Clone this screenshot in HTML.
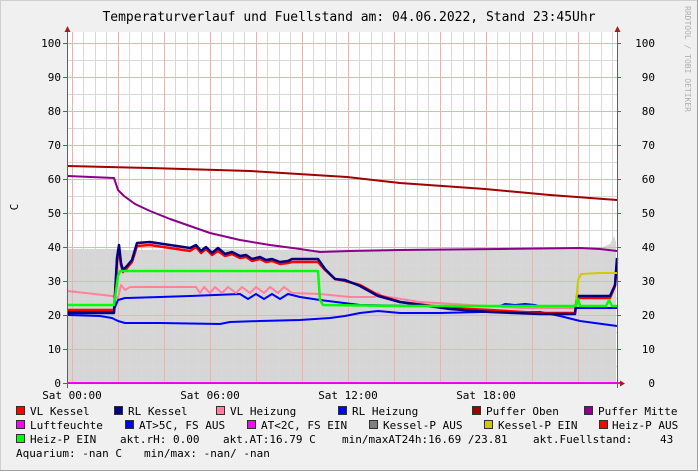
<!DOCTYPE html>
<html><head><meta charset="utf-8"><style>
html,body{margin:0;padding:0;}
body{width:698px;height:471px;background:#f0f0f0;overflow:hidden;position:relative;font-family:"DejaVu Sans Mono","Liberation Mono",monospace;}
svg{position:absolute;left:0;top:0;}
</style></head><body>
<svg width="698" height="471" xmlns="http://www.w3.org/2000/svg" font-family="DejaVu Sans Mono, Liberation Mono, monospace">
<rect x="0" y="0" width="698" height="471" fill="#f0f0f0"/>
<line x1="0.5" y1="0" x2="0.5" y2="471" stroke="#d0d0d0"/>
<line x1="0" y1="0.5" x2="698" y2="0.5" stroke="#d0d0d0"/>
<line x1="697.5" y1="0" x2="697.5" y2="471" stroke="#a0a0a0"/>
<line x1="0" y1="470.5" x2="698" y2="470.5" stroke="#a0a0a0"/>
<rect x="68" y="32" width="549" height="351" fill="#ffffff"/>
<!-- grey fill -->
<polygon points="68,249 120,249 125,250 200,249 300,250 400,249 500,248 600,248 610,244 614,236 616,242 616,383 68,383" fill="#d6d6d6"/>
<!-- minor grid -->
<g stroke="#d8d8d8" stroke-width="1">
<path d="M83.5 32V383M95.5 32V383M106.5 32V383M129.5 32V383M141.5 32V383M152.5 32V383M175.5 32V383M187.5 32V383M198.5 32V383M221.5 32V383M233.5 32V383M244.5 32V383M267.5 32V383M279.5 32V383M290.5 32V383M313.5 32V383M325.5 32V383M336.5 32V383M359.5 32V383M371.5 32V383M382.5 32V383M405.5 32V383M417.5 32V383M428.5 32V383M451.5 32V383M463.5 32V383M474.5 32V383M497.5 32V383M509.5 32V383M520.5 32V383M543.5 32V383M555.5 32V383M566.5 32V383M589.5 32V383M601.5 32V383M612.5 32V383"/>
<path d="M68 366.5H617M68 332.5H617M68 298.5H617M68 264.5H617M68 230.5H617M68 196.5H617M68 162.5H617M68 128.5H617M68 94.5H617M68 60.5H617"/>
</g>
<g stroke="#f0b0b0" stroke-width="1">
<path d="M72.5 32V383M118.5 32V383M164.5 32V383M210.5 32V383M256.5 32V383M302.5 32V383M348.5 32V383M394.5 32V383M440.5 32V383M486.5 32V383M532.5 32V383M578.5 32V383"/>
<path d="M68 349.5H617M68 315.5H617M68 281.5H617M68 247.5H617M68 213.5H617M68 179.5H617M68 145.5H617M68 111.5H617M68 77.5H617M68 43.5H617"/>
</g>
<g fill="none" stroke-linejoin="round">
<!-- AT>5C low blue -->
<polyline stroke="#0000ff" stroke-width="2" points="68,315 100,316 112,318 118,321 125,323 160,323 220,324 230,322 260,321 300,320 330,318 345,316 360,313 378,311 400,313 440,313 480,312 520,312 540,312 560,316 580,321 617,326"/>
<!-- RL Heizung blue -->
<polyline stroke="#0000ff" stroke-width="2" points="68,312 113,312 118,300 125,298 160,297 190,296 240,294 248,299 256,294 264,299 272,294 280,299 288,294 300,297 320,300 360,305 420,306 480,306 500,306 505,304 515,305 525,304 535,305 545,308 617,308"/>
<!-- VL Heizung pink -->
<polyline stroke="#ff80a0" stroke-width="2" points="68,291 112,296 118,298 121,285 125,290 130,287 150,287 190,287 196,287 200,293 204,287 210,293 215,287 222,293 228,287 236,293 242,287 250,293 256,287 264,293 270,287 278,293 284,287 292,293 320,294 350,297 375,297 378,293 382,296 420,302 470,305 520,308 577,308"/>
<!-- VL Kessel red -->
<polyline stroke="#ff0000" stroke-width="2.5" points="68,310 114,310 117,262 119,248 121,265 123,272 127,268 132,262 137,246 150,245 190,251 196,247 201,253 206,249 212,255 218,251 225,256 232,254 240,258 246,257 252,261 260,259 266,262 272,261 280,264 288,263 292,262 318,262 325,270 335,279 345,281 360,285 378,295 400,302 450,308 490,310 540,313 575,313 577,298 610,298 615,286 617,262"/>
<!-- RL Kessel navy -->
<polyline stroke="#000080" stroke-width="2.5" points="68,313 114,313 117,258 119,245 121,263 123,270 127,266 132,260 137,243 150,242 190,248 196,245 201,251 206,247 212,253 218,248 225,254 232,252 240,256 246,255 252,259 260,257 266,260 272,259 280,262 288,261 292,259 318,259 325,269 335,279 345,280 360,286 378,296 400,302 450,309 490,312 540,314 575,314 577,296 610,296 615,285 617,258"/>
<!-- Puffer Oben -->
<polyline stroke="#a00000" stroke-width="2" points="68,166 150,168 250,171 347,177 400,183 485,189 550,195 617,200"/>
<!-- Puffer Mitte -->
<polyline stroke="#8b008b" stroke-width="2" points="68,176 114,178 118,190 124,196 135,204 150,211 170,219 190,226 210,233 240,240 270,245 300,249 320,252 350,251 400,250 500,249 580,248 600,249 617,251"/>
<!-- Kessel-P EIN yellow -->
<polyline stroke="#cccc00" stroke-width="2" points="576,305 578,280 581,274 600,273 617,273"/>
<!-- Heiz-P EIN green -->
<polyline stroke="#00ff00" stroke-width="2.5" points="68,305 114,305 118,276 120,271 200,271 318,271 320,300 323,305 400,306 576,306 578,299 580,306 606,306 609,300 612,306 617,306"/>
<!-- Luftfeuchte -->
<line x1="68" y1="383" x2="620" y2="383" stroke="#ff00ff" stroke-width="2"/>
</g>
<!-- axes -->
<line x1="67.5" y1="28" x2="67.5" y2="388" stroke="#606060"/>
<line x1="617.5" y1="28" x2="617.5" y2="388" stroke="#606060"/>
<line x1="63" y1="383.5" x2="622" y2="383.5" stroke="#606060"/>
<polygon points="64.5,32 70.5,32 67.5,26" fill="#a02020"/>
<polygon points="614.5,32 620.5,32 617.5,26" fill="#a02020"/>
<polygon points="620,380.5 620,386.5 625,383.5" fill="#a02020"/>
<g stroke="#606060"><path d="M63 349.5H68M63 315.5H68M63 281.5H68M63 247.5H68M63 213.5H68M63 179.5H68M63 145.5H68M63 111.5H68M63 77.5H68M63 43.5H68M617 349.5H621M617 315.5H621M617 281.5H621M617 247.5H621M617 213.5H621M617 179.5H621M617 145.5H621M617 111.5H621M617 77.5H621M617 43.5H621"/></g>
<g font-size="11" fill="#000" text-anchor="end">
<text x="61" y="387">0</text><text x="61" y="353">10</text><text x="61" y="319">20</text><text x="61" y="285">30</text><text x="61" y="251">40</text><text x="61" y="217">50</text><text x="61" y="183">60</text><text x="61" y="149">70</text><text x="61" y="115">80</text><text x="61" y="81">90</text><text x="61" y="47">100</text>
<text x="655" y="387">0</text><text x="655" y="353">10</text><text x="655" y="319">20</text><text x="655" y="285">30</text><text x="655" y="251">40</text><text x="655" y="217">50</text><text x="655" y="183">60</text><text x="655" y="149">70</text><text x="655" y="115">80</text><text x="655" y="81">90</text><text x="655" y="47">100</text>
</g>
<g font-size="11" fill="#000" text-anchor="middle">
<text x="72" y="399">Sat 00:00</text><text x="210" y="399">Sat 06:00</text><text x="348" y="399">Sat 12:00</text><text x="486" y="399">Sat 18:00</text>
</g>
<text x="349" y="21" font-size="13" text-anchor="middle" fill="#000">Temperaturverlauf und Fuellstand am: 04.06.2022, Stand 23:45Uhr</text>
<text transform="translate(18,207) rotate(-90)" font-size="11" text-anchor="middle" fill="#000">C</text>
<text transform="translate(685,6) rotate(90)" font-size="8" fill="#b0b0b0">RRDTOOL / TOBI OETIKER</text>
<!-- legend -->
<g stroke="#303030" stroke-width="1">
<rect x="16.5" y="406.5" width="8" height="8" fill="#ff0000"/>
<rect x="114.5" y="406.5" width="8" height="8" fill="#000080"/>
<rect x="216.5" y="406.5" width="8" height="8" fill="#ff80a0"/>
<rect x="338.5" y="406.5" width="8" height="8" fill="#0000ff"/>
<rect x="472.5" y="406.5" width="8" height="8" fill="#a00000"/>
<rect x="584.5" y="406.5" width="8" height="8" fill="#8b008b"/>
<rect x="16.5" y="420.5" width="8" height="8" fill="#ff00ff"/>
<rect x="125.5" y="420.5" width="8" height="8" fill="#0000ff"/>
<rect x="247.5" y="420.5" width="8" height="8" fill="#ff00ff"/>
<rect x="369.5" y="420.5" width="8" height="8" fill="#808080"/>
<rect x="484.5" y="420.5" width="8" height="8" fill="#cccc00"/>
<rect x="599.5" y="420.5" width="8" height="8" fill="#ff0000"/>
<rect x="16.5" y="434.5" width="8" height="8" fill="#00ff00"/>
</g>
<g font-size="11" fill="#000" xml:space="preserve">
<text x="30" y="415">VL Kessel</text><text x="128" y="415">RL Kessel</text><text x="230" y="415">VL Heizung</text><text x="352" y="415">RL Heizung</text><text x="486" y="415">Puffer Oben</text><text x="598" y="415">Puffer Mitte</text>
<text x="30" y="429">Luftfeuchte</text><text x="139" y="429">AT&gt;5C, FS AUS</text><text x="261" y="429">AT&lt;2C, FS EIN</text><text x="383" y="429">Kessel-P AUS</text><text x="498" y="429">Kessel-P EIN</text><text x="612" y="429">Heiz-P AUS</text>
<text x="30" y="443">Heiz-P EIN</text><text x="120" y="443">akt.rH: 0.00</text><text x="223" y="443">akt.AT:16.79 C</text><text x="342" y="443">min/maxAT24h:16.69 /23.81</text><text x="533" y="443">akt.Fuellstand:</text><text x="660" y="443">43</text>
<text x="16" y="457">Aquarium: -nan C</text><text x="144" y="457">min/max: -nan/ -nan</text>
</g>
</svg>
</body></html>
